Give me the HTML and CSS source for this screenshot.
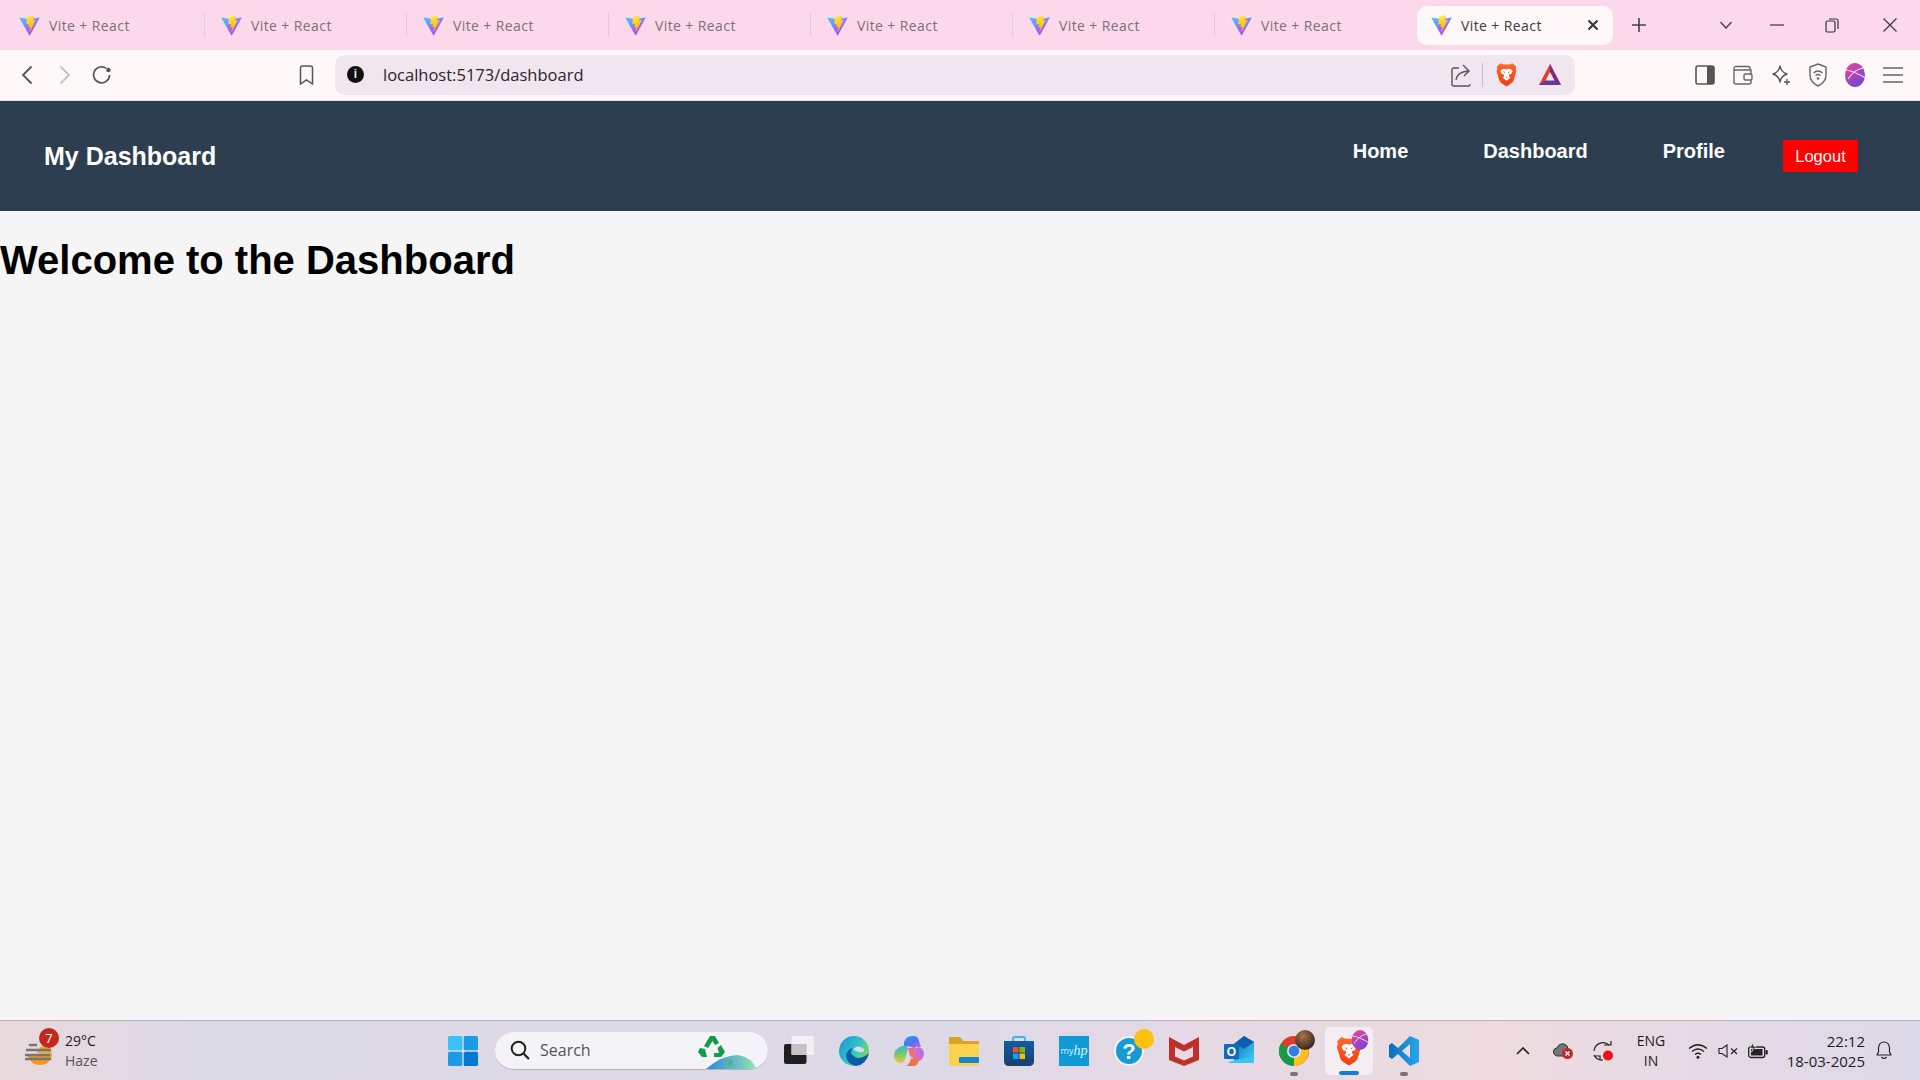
FILE: index.html
```html
<!DOCTYPE html>
<html lang="en">
<head>
    <meta charset="UTF-8">
    <meta name="viewport" content="width=device-width, initial-scale=1.0">
    <title>Vite + React</title>
    <link rel="stylesheet" href="styles.css">
</head>
<body>
    <svg class="defs" width="0" height="0">
        <defs>
            <linearGradient id="viteBlue" x1="0" y1="0" x2="0.6" y2="1">
                <stop offset="0" stop-color="#41d1ff"/>
                <stop offset="1" stop-color="#bd34fe"/>
            </linearGradient>
            <linearGradient id="viteYellow" x1="0.3" y1="0" x2="0.5" y2="1">
                <stop offset="0" stop-color="#ffea83"/>
                <stop offset="0.2" stop-color="#ffdd35"/>
                <stop offset="1" stop-color="#ffa800"/>
            </linearGradient>
            <linearGradient id="braveOrange" x1="0" y1="0" x2="0" y2="1">
                <stop offset="0" stop-color="#ff6a2b"/>
                <stop offset="1" stop-color="#f03d12"/>
            </linearGradient>
            <linearGradient id="avatarGrad" x1="0.2" y1="0" x2="0.8" y2="1">
                <stop offset="0" stop-color="#e8439a"/>
                <stop offset="1" stop-color="#6b45d8"/>
            </linearGradient>
            <linearGradient id="edgeGrad" x1="0" y1="0" x2="1" y2="0.6">
                <stop offset="0" stop-color="#1d8fd8"/>
                <stop offset="0.6" stop-color="#2fc5c8"/>
                <stop offset="1" stop-color="#7fdc5e"/>
            </linearGradient>
            <linearGradient id="copilotBlue" x1="0" y1="0" x2="1" y2="1">
                <stop offset="0" stop-color="#17a5ef"/>
                <stop offset="0.55" stop-color="#5b6ff0"/>
                <stop offset="1" stop-color="#c86bdc"/>
            </linearGradient>
            <linearGradient id="copilotWarm" x1="0" y1="0" x2="1" y2="1">
                <stop offset="0" stop-color="#e66bb0"/>
                <stop offset="0.6" stop-color="#f4705a"/>
                <stop offset="1" stop-color="#f7a24b"/>
            </linearGradient>
            <linearGradient id="copilotGreen" x1="0" y1="0" x2="0" y2="1">
                <stop offset="0" stop-color="#35b8c8"/>
                <stop offset="0.5" stop-color="#7ccb6a"/>
                <stop offset="1" stop-color="#f7c53c"/>
            </linearGradient>
            <linearGradient id="globeGrad" x1="0" y1="0" x2="1" y2="0">
                <stop offset="0" stop-color="#2e86e0"/>
                <stop offset="1" stop-color="#8fe3b0"/>
            </linearGradient>
            <linearGradient id="storeGrad" x1="0" y1="0" x2="0" y2="1">
                <stop offset="0" stop-color="#0e5ea8"/>
                <stop offset="1" stop-color="#1d3c6e"/>
            </linearGradient>
            <linearGradient id="vsGrad" x1="0" y1="0" x2="1" y2="0">
                <stop offset="0" stop-color="#0a70b8"/>
                <stop offset="1" stop-color="#25a8ee"/>
            </linearGradient>
            <linearGradient id="outlookGrad" x1="0" y1="0" x2="1" y2="1">
                <stop offset="0" stop-color="#0f6cbd"/>
                <stop offset="1" stop-color="#40d0f5"/>
            </linearGradient>
            <symbol id="vite" viewBox="0 0 410 404">
                <path fill="url(#viteBlue)" d="M399.641 59.5246L215.643 388.545C211.844 395.338 202.084 395.378 198.228 388.618L10.5817 59.5563C6.38087 52.1896 12.6802 43.2665 21.0281 44.7586L205.223 77.6824C206.398 77.8924 207.601 77.8904 208.776 77.6763L389.119 44.8058C397.439 43.2894 403.768 52.1434 399.641 59.5246Z"/>
                <path fill="url(#viteYellow)" d="M292.965 1.5744L156.801 28.2552C154.563 28.6937 152.906 30.5903 152.771 32.8664L144.395 174.33C144.198 177.662 147.258 180.248 150.51 179.498L188.42 170.749C191.967 169.931 195.172 173.055 194.443 176.622L183.18 231.775C182.422 235.487 185.907 238.661 189.532 237.56L212.947 230.446C216.577 229.344 220.065 232.527 219.297 236.242L201.398 322.875C200.278 328.294 207.486 331.249 210.492 326.603L212.5 323.5L323.454 102.072C325.312 98.3645 322.108 94.137 318.036 94.9228L279.014 102.454C275.347 103.161 272.227 99.746 273.262 96.1583L298.731 7.86689C299.767 4.27314 296.636 0.855181 292.965 1.5744Z"/>
            </symbol>
            <symbol id="brave" viewBox="0 0 24 28">
                <path fill="url(#braveOrange)" d="M5 1 L9 2.5 h6 L19 1 L23 5 L22.4 8 L23.4 10 L20 21 Q19.4 23 17 24.4 L12 27.6 L7 24.4 Q4.6 23 4 21 L0.6 10 L1.6 8 L1 5 Z"/>
                <path fill="#fff" d="M7 8 L10 7.4 L12 8.2 L14 7.4 L17 8 L19 10 L17.4 13.4 L15 14 L14.6 16 L16.4 17.6 L12 21 L7.6 17.6 L9.4 16 L9 14 L6.6 13.4 L5 10 Z"/>
                <path fill="url(#braveOrange)" d="M8 10.4 L10.6 11.2 L9.8 12.6 Z M16 10.4 L13.4 11.2 L14.2 12.6 Z M10.8 17 h2.4 L12 18.4 Z"/>
            </symbol>
            <symbol id="avatar" viewBox="0 0 20 24">
                <ellipse cx="10" cy="12" rx="10" ry="12" fill="url(#avatarGrad)"/>
                <path fill="none" stroke="#f3dbe8" stroke-width="1.2" d="M1 7 C7 8 14 11 20 15 M3 16 C7 10 12 6 18 5"/>
            </symbol>
        </defs>
    </svg>

    <div class="tabstrip">
        <div class="tab"><svg class="favicon"><use href="#vite"/></svg><span>Vite + React</span></div>
        <div class="tab"><svg class="favicon"><use href="#vite"/></svg><span>Vite + React</span></div>
        <div class="tab"><svg class="favicon"><use href="#vite"/></svg><span>Vite + React</span></div>
        <div class="tab"><svg class="favicon"><use href="#vite"/></svg><span>Vite + React</span></div>
        <div class="tab"><svg class="favicon"><use href="#vite"/></svg><span>Vite + React</span></div>
        <div class="tab"><svg class="favicon"><use href="#vite"/></svg><span>Vite + React</span></div>
        <div class="tab tab-last"><svg class="favicon"><use href="#vite"/></svg><span>Vite + React</span></div>
        <div class="tab tab-active">
            <svg class="favicon"><use href="#vite"/></svg><span>Vite + React</span>
            <svg class="tab-close" width="12" height="12" viewBox="0 0 12 12"><path d="M1.5 1.5 L10.5 10.5 M10.5 1.5 L1.5 10.5" stroke="#333" stroke-width="2"/></svg>
        </div>
        <svg class="new-tab" width="16" height="16" viewBox="0 0 16 16"><path d="M8 1 V15 M1 8 H15" stroke="#444" stroke-width="1.6"/></svg>
        <svg class="tab-list" width="14" height="10" viewBox="0 0 14 10"><path d="M1.5 2 L7 8 L12.5 2" fill="none" stroke="#555" stroke-width="1.7"/></svg>
        <svg class="win-btn win-min" width="14" height="2" viewBox="0 0 14 2"><path d="M0 1 H14" stroke="#333" stroke-width="1.2"/></svg>
        <svg class="win-btn win-max" width="14" height="16" viewBox="0 0 14 16"><rect x="1" y="4" width="9" height="11" rx="1.5" fill="none" stroke="#333" stroke-width="1.2"/><path d="M4 2 H11 Q13 2 13 4 V12" fill="none" stroke="#333" stroke-width="1.2"/></svg>
        <svg class="win-btn win-close" width="14" height="14" viewBox="0 0 14 14"><path d="M0.5 0.5 L13.5 13.5 M13.5 0.5 L0.5 13.5" stroke="#333" stroke-width="1.1"/></svg>
    </div>

    <div class="toolbar">
        <svg class="tool-back" width="12" height="20" viewBox="0 0 12 20"><path d="M10.5 1.5 L2 10 L10.5 18.5" fill="none" stroke="#555" stroke-width="1.8"/></svg>
        <svg class="tool-forward" width="12" height="20" viewBox="0 0 12 20"><path d="M1.5 1.5 L10 10 L1.5 18.5" fill="none" stroke="#c4c0c2" stroke-width="1.8"/></svg>
        <svg class="tool-reload" width="20" height="20" viewBox="0 0 20 20"><path d="M17.6 10 A8 8 0 1 1 14.4 3.4" fill="none" stroke="#555" stroke-width="1.7"/><circle cx="16.4" cy="5" r="2.2" fill="#555"/></svg>
        <svg class="tool-bookmark" width="15" height="20" viewBox="0 0 15 20"><path d="M1.5 3 Q1.5 1 3.5 1 H11.5 Q13.5 1 13.5 3 V19 L7.5 15 L1.5 19 Z" fill="none" stroke="#555" stroke-width="1.5"/></svg>
        <div class="urlbar">
            <span class="url-info">i</span>
            <span class="url-text">localhost:5173/dashboard</span>
            <svg class="url-share" width="20" height="24" viewBox="0 0 20 24"><path d="M8 5 H3 Q1 5 1 7 V21 Q1 23 3 23 H18 Q19 23 19 21" fill="none" stroke="#555" stroke-width="1.4"/><path d="M5 17 Q6 9 17 8 M12 2 L18 8 L13 13" fill="none" stroke="#555" stroke-width="1.4"/></svg>
            <span class="url-sep"></span>
            <svg class="url-brave" width="21" height="25"><use href="#brave"/></svg>
            <svg class="url-bat" width="24" height="24" viewBox="0 0 24 24"><path d="M12 1 L23 22 H1 Z" fill="#e23b2b"/><path d="M12 1 L23 22 L16 17 L12 9 Z" fill="#7a2a86"/><path d="M1 22 H23 L16 17 H8 Z" fill="#5f3a9e"/><path d="M12 9 L16.5 17.6 H7.5 Z" fill="#f0e6ef"/></svg>
        </div>
        <div class="tool-right">
            <svg width="20" height="20" viewBox="0 0 20 20"><rect x="1" y="1" width="18" height="18" rx="2" fill="none" stroke="#555" stroke-width="1.6"/><rect x="12" y="1" width="7" height="18" fill="#555"/></svg>
            <svg width="20" height="20" viewBox="0 0 20 20"><path d="M17 5 V3 Q17 1.5 15 1.5 H3 Q1 1.5 1 4 V17 Q1 19 3 19 H16 Q18 19 18 17 V5 Z M1 5 H18" fill="none" stroke="#666" stroke-width="1.4"/><rect x="11" y="9" width="8" height="6" rx="1.5" fill="#fff8f8" stroke="#666" stroke-width="1.4"/></svg>
            <svg width="20" height="22" viewBox="0 0 20 22"><path d="M9 2 Q10 8 16 10 Q10 12 9 18 Q8 12 2 10 Q8 8 9 2 Z" fill="none" stroke="#555" stroke-width="1.5" stroke-linejoin="round"/><path d="M16 15 V21 M13 18 H19" stroke="#555" stroke-width="1.4"/></svg>
            <svg width="18" height="24" viewBox="0 0 18 24"><path d="M9 1 L17 4 V12 Q17 19 9 23 Q1 19 1 12 V4 Z" fill="none" stroke="#666" stroke-width="1.4"/><path d="M4.5 10 Q9 6 13.5 10 M6.5 12.5 Q9 10.5 11.5 12.5" fill="none" stroke="#666" stroke-width="1.3"/><circle cx="9" cy="15.5" r="1.3" fill="#666"/></svg>
            <svg width="20" height="24"><use href="#avatar"/></svg>
            <svg width="20" height="18" viewBox="0 0 20 18"><path d="M0 2 H20 M0 9 H20 M0 16 H20" stroke="#666" stroke-width="1.5"/></svg>
        </div>
    </div>

    <nav class="navbar">
        <div class="nav-logo">My Dashboard</div>
        <ul class="nav-links">
            <li><a href="#">Home</a></li>
            <li><a href="#">Dashboard</a></li>
            <li><a href="#">Profile</a></li>
            <li class="nav-logout"><button>Logout</button></li>
        </ul>
    </nav>

    <main class="content">
        <h1>Welcome to the Dashboard</h1>
    </main>

    <footer class="taskbar">
        <div class="weather">
            <div class="weather-icon">
                <svg width="30" height="36" viewBox="0 0 30 36"><path d="M3 21 H27 A12 11 0 0 1 3 21 Z" fill="#f0971c"/><path d="M12 20 Q14 11 24 12 L27 21 Z" fill="#f2a92c"/><path d="M5 12 H11 M2 17 H25 M0 22 H24 M1 26 H25" stroke="#77757a" stroke-width="2.6" stroke-linecap="round"/></svg>
                <span class="weather-badge">7</span>
            </div>
            <div class="weather-text"><span>29°C</span><span class="weather-sub">Haze</span></div>
        </div>

        <div class="task-center">
            <svg class="task-icon" viewBox="0 0 30 30"><rect x="0" y="0" width="14.3" height="14.3" rx="1.5" fill="#37c3f7"/><rect x="15.7" y="0" width="14.3" height="14.3" rx="1.5" fill="#1b9be4"/><rect x="0" y="15.7" width="14.3" height="14.3" rx="1.5" fill="#1b9be4"/><rect x="15.7" y="15.7" width="14.3" height="14.3" rx="1.5" fill="#0078d4"/></svg>

            <div class="searchbox">
                <svg width="20" height="20" viewBox="0 0 20 20"><circle cx="8.5" cy="8.5" r="6.8" fill="none" stroke="#222" stroke-width="2"/><path d="M13.5 13.5 L19 19" stroke="#222" stroke-width="2.2"/></svg>
                <span>Search</span>
                <svg class="search-art" width="66" height="36" viewBox="0 0 66 36"><path d="M14 3 L19 3 L23 10 L19 12 L16.5 8 L12 15 L8 13 Z M25 12 L29 19 L25 24 L18 24 V20 L23 20 L21.5 15 Z M4 15 L9 16 L11 24 L6 24 L2 19 Z" fill="#109c4a"/><path d="M10 36 Q26 22 42 22 Q56 24 60 36 Z" fill="url(#globeGrad)"/><path d="M30 27 Q34 25 37 28 L35 33 L31 32 Z" fill="#4fb38f"/></svg>
            </div>

            <svg class="task-icon" viewBox="0 0 30 30"><rect x="0" y="8" width="22.5" height="20" rx="2" fill="#1f1f1f"/><rect x="7.5" y="0" width="22.5" height="19" rx="1.5" fill="#f4f3f6" fill-opacity="0.85"/><rect x="7.5" y="8" width="15" height="11" fill="#c4c2c4"/></svg>

            <svg class="task-icon" viewBox="0 0 30 30"><circle cx="15" cy="15" r="15" fill="url(#edgeGrad)"/><path d="M30 17 Q22 24 16 21 Q9 18 14 12 Q8 13 7 20 Q8 28 17 30 Q27 29 30 17 Z" fill="#0c5aa8"/><path d="M14 13 Q19 8 25 13 Q26 17 20 16 Q15 15 14 13 Z" fill="#dcdae6"/></svg>

            <svg class="task-icon" viewBox="0 0 30 30"><path d="M10 6 Q12 0 18 0 H20 Q24 0 25 5 L27 11 Q23 10 20 12 L17 11 Q13 9 10 12 Z" fill="url(#copilotBlue)"/><path d="M25 11 Q30 13 30 18 Q29 25 24 25 H18 L22 12 Z" fill="#c06fdc"/><path d="M8 10 Q12 9 14 12 L11 24 Q9 28 5 27 Q0 25 0 19 Q0 13 8 10 Z" fill="url(#copilotGreen)"/><path d="M14 12 L22 12 L18 26 Q16 30 11 30 H20 Q24 29 25 24 L24 20 Q19 23 16 20 Z" fill="url(#copilotWarm)"/><path d="M12 30 H21 Q25 27 25 22 Q20 24 17 22 Q16 28 12 30 Z" fill="#f3704f"/></svg>

            <svg class="task-icon" viewBox="0 0 30 30"><path d="M0 2 Q0 1 1 1 H11 L14 5 H30 V10 H0 Z" fill="#dca320"/><path d="M0 8 H30 V29 Q30 30 29 30 H1 Q0 30 0 29 Z" fill="#fbd24e"/><rect x="10" y="21" width="20" height="6" rx="1" fill="#1486d1"/></svg>

            <svg class="task-icon" viewBox="0 0 30 30"><path d="M9 6 V3 Q9 1 11 1 H19 Q21 1 21 3 V6" fill="none" stroke="#3bb5e8" stroke-width="1.8"/><path d="M0 5 H30 V25 Q30 30 25 30 H5 Q0 30 0 25 Z" fill="url(#storeGrad)"/><rect x="9" y="11" width="5.5" height="5.5" fill="#f25022"/><rect x="15.5" y="11" width="5.5" height="5.5" fill="#7fba00"/><rect x="9" y="17.5" width="5.5" height="5.5" fill="#00a4ef"/><rect x="15.5" y="17.5" width="5.5" height="5.5" fill="#ffb900"/></svg>

            <div class="task-myhp"><span>my</span><em>hp</em></div>

            <div class="task-wrap">
                <svg class="task-icon" viewBox="0 0 30 30"><circle cx="15" cy="15" r="14" fill="#159ad6" stroke="#f4f3f6" stroke-width="2"/><text x="15" y="23" text-anchor="middle" class="help-mark">?</text></svg>
                <span class="help-dot"></span>
            </div>

            <svg class="task-icon" viewBox="0 0 30 30"><path d="M0 1 L15 9 L30 1 V24 L15 30 L0 24 Z" fill="#c0302b"/><path d="M6 11 L15 15.5 L24 11 V20.5 L15 24.5 L6 20.5 Z" fill="#e6d9e2"/></svg>

            <svg class="task-icon" viewBox="0 0 30 30"><path d="M10 8 L20 0 L30 6 V25 Q30 27 28 27 H10 Z" fill="url(#outlookGrad)"/><path d="M10 8 L20 0 L30 6 L20 13 Z" fill="#0e5fae"/><path d="M4 26 L30 20 V25 Q30 27 28 27 H6 Z" fill="#37c6f4"/><rect x="0" y="8" width="15" height="15" rx="1" fill="#0f6cbd"/><text x="7.5" y="20" text-anchor="middle" class="outlook-mark">O</text></svg>

            <div class="task-wrap task-running">
                <svg class="task-icon" viewBox="0 0 30 30"><circle cx="15" cy="15" r="15" fill="#e33b2e"/><path d="M15 15 L28 8 A15 15 0 0 1 15 30 Z" fill="#fbc116"/><path d="M15 15 L15 30 A15 15 0 0 1 2 7.5 Z" fill="#189a47"/><circle cx="15" cy="15" r="7" fill="#e8e6ee"/><circle cx="15" cy="15" r="5.4" fill="#2f7fe6"/></svg>
                <span class="chrome-photo"></span>
            </div>

            <div class="task-wrap task-active">
                <svg class="task-icon" viewBox="0 0 24 28"><use href="#brave"/></svg>
                <svg class="brave-avatar" width="20" height="20"><use href="#avatar"/></svg>
            </div>

            <div class="task-wrap task-running">
                <svg class="task-icon" viewBox="0 0 30 30"><path d="M21 0 L30 4 V26 L21 30 L9 18 L3 23 L0 21 V9 L3 7 L9 12 Z M21 8 L13 15 L21 22 Z" fill="url(#vsGrad)" fill-rule="evenodd"/></svg>
            </div>
        </div>

        <div class="tray">
            <svg class="tray-chevron" width="14" height="8" viewBox="0 0 14 8"><path d="M1 7 L7 1 L13 7" fill="none" stroke="#222" stroke-width="1.6"/></svg>
            <svg class="tray-cloud" width="20" height="16" viewBox="0 0 20 16"><path d="M4 13 Q0 12 0.5 8 Q1 5 4 5 Q6 0 11 1 Q15 2 15 6 L12 13 Z" fill="#77757a" stroke="#333" stroke-width="1"/><circle cx="14.5" cy="10.5" r="5.5" fill="#c8242c"/><path d="M12.5 8.5 L16.5 12.5 M16.5 8.5 L12.5 12.5" stroke="#fff" stroke-width="1.3"/></svg>
            <svg class="tray-sync" width="20" height="20" viewBox="0 0 20 20"><path d="M1 10 A9 9 0 0 1 16 4 M1 14 A9 9 0 0 0 10 19" fill="none" stroke="#222" stroke-width="1.2"/><path d="M11 4 H18 V0" fill="none" stroke="#222" stroke-width="1.2"/><path d="M1 15 H7 V19" fill="none" stroke="#222" stroke-width="1.2"/><circle cx="15" cy="14.5" r="5" fill="#ee0f1c"/></svg>
            <div class="tray-lang"><span>ENG</span><span>IN</span></div>
            <svg class="tray-wifi" width="20" height="16" viewBox="0 0 20 16"><path d="M1 5.5 Q10 -2 19 5.5 M4 8.5 Q10 3.5 16 8.5 M7 11.5 Q10 9 13 11.5" fill="none" stroke="#222" stroke-width="1.3"/><circle cx="10" cy="14.3" r="1.5" fill="#222"/></svg>
            <svg class="tray-sound" width="20" height="14" viewBox="0 0 20 14"><path d="M1 4.5 H4 L9 1 V13 L4 9.5 H1 Z" fill="none" stroke="#222" stroke-width="1.1"/><path d="M13 4.5 L19 10 M19 4.5 L13 10" stroke="#222" stroke-width="1.1"/></svg>
            <svg class="tray-battery" width="20" height="16" viewBox="0 0 20 16"><rect x="0.7" y="4" width="16" height="10.5" rx="2" fill="none" stroke="#222" stroke-width="1.3"/><rect x="3" y="6" width="11.5" height="6.5" fill="#222"/><rect x="17.5" y="7" width="2.3" height="4.5" rx="1" fill="#222"/><path d="M5 0 L2 5 H5 L3.5 9 L8 3.5 H5.5 Z" fill="#222" stroke="#e6d8e3" stroke-width="0.6"/></svg>
            <div class="tray-clock"><span>22:12</span><span>18-03-2025</span></div>
            <svg class="tray-bell" width="18" height="19" viewBox="0 0 18 19"><path d="M2 14 L3.5 11 V7 Q4 1 9 1 Q14 1 14.5 7 V11 L16 14 Z" fill="none" stroke="#222" stroke-width="1.2" stroke-linejoin="round"/><path d="M6.5 16 Q9 19 11.5 16" fill="none" stroke="#222" stroke-width="1.2"/></svg>
        </div>
    </footer>
</body>
</html>
```

FILE: styles.css
```css
* {
    padding: 0;
    margin: 0;
    box-sizing: border-box;
}

body {
    width: 1920px;
    height: 1080px;
    overflow: hidden;
    display: flex;
    flex-direction: column;
    background: #f5f5f5;
    font-family: "Liberation Sans", Arial, sans-serif;
}

.defs {
    position: absolute;
}

/* browser tabs */
.tabstrip {
    height: 50px;
    flex-shrink: 0;
    display: flex;
    align-items: center;
    padding-left: 3px;
    background: #fbd9ea;
    font-family: "Open Sans", sans-serif;
    font-size: 14px;
    letter-spacing: 0.4px;
    color: #7d6f77;
}

.tab {
    width: 202px;
    height: 40px;
    flex-shrink: 0;
    display: flex;
    align-items: center;
    gap: 9px;
    padding-left: 16px;
    position: relative;
}

.tab::after {
    content: "";
    position: absolute;
    right: 0;
    top: 8px;
    height: 24px;
    width: 1px;
    background: #e3c8d7;
}

.tab-last::after {
    display: none;
}

.tab-active {
    width: 196px;
    height: 39px;
    padding-left: 14px;
    border-radius: 10px;
    background: #fff8f8;
    color: #3d3a3c;
}

.tab-active::after {
    display: none;
}

.favicon {
    width: 21px;
    height: 21px;
    flex-shrink: 0;
}

.tab-close {
    margin-left: auto;
    margin-right: 14px;
}

.new-tab {
    margin-left: 18px;
}

.tab-list {
    margin-left: 72px;
}

.win-min {
    margin-left: 37px;
}

.win-max {
    margin-left: 41px;
}

.win-close {
    margin-left: 44px;
}

/* toolbar + address bar */
.toolbar {
    height: 51px;
    flex-shrink: 0;
    display: flex;
    align-items: center;
    padding-bottom: 1px;
    background: #fff8f8;
    border-bottom: 1px solid #f0dde5;
}

.tool-back {
    margin-left: 21px;
}

.tool-forward {
    margin-left: 26px;
}

.tool-reload {
    margin-left: 21px;
}

.tool-bookmark {
    margin-left: 187px;
}

.urlbar {
    width: 1240px;
    height: 40px;
    margin-left: 21px;
    padding-left: 12px;
    display: flex;
    align-items: center;
    border-radius: 10px;
    background: #f0e6ef;
}

.url-info {
    width: 17px;
    height: 17px;
    border-radius: 50%;
    background: #111;
    color: #f0e6ef;
    font-size: 12px;
    font-weight: bold;
    line-height: 17px;
    text-align: center;
}

.url-text {
    margin-left: 19px;
    font-family: "Open Sans", sans-serif;
    font-size: 16.5px;
    color: #2a2528;
}

.url-share {
    margin-left: auto;
}

.url-sep {
    width: 1px;
    height: 24px;
    margin-left: 11px;
    background: #c9c0c8;
}

.url-brave {
    margin-left: 13px;
}

.url-bat {
    margin-left: 21px;
    margin-right: 13px;
}

.tool-right {
    margin-left: 120px;
    display: flex;
    align-items: center;
    gap: 18px;
}

/* app navbar */
.navbar {
    height: 110px;
    flex-shrink: 0;
    display: flex;
    align-items: center;
    justify-content: space-between;
    padding: 0 62px 0 44px;
    background: #2c3e50;
    color: #fff;
}

.nav-logo {
    font-size: 25px;
    font-weight: bold;
}

.nav-links {
    display: flex;
    align-items: center;
    gap: 75px;
    list-style-type: none;
}

.nav-links a {
    display: block;
    padding-bottom: 10px;
    font-size: 20px;
    font-weight: bold;
    color: #fff;
    text-decoration: none;
}

.nav-links .nav-logout {
    margin-left: -17px;
}

.nav-logout button {
    width: 75px;
    height: 32px;
    border: none;
    background: #ff0000;
    color: #fff;
    font-family: "Liberation Sans", Arial, sans-serif;
    font-size: 16.5px;
}

.content {
    flex: 1;
}

.content h1 {
    margin: 27px 0;
    font-size: 40px;
    font-weight: bold;
    color: #000;
}

/* windows taskbar */
.taskbar {
    height: 60px;
    flex-shrink: 0;
    display: flex;
    align-items: center;
    border-top: 1px solid #b9b5bc;
    background: linear-gradient(90deg, #e9d9dc 0%, #dcd9e6 10%, #ded9e7 50%, #e6d9e3 65%, #eedcdf 78%, #e8dae3 85%, #dcd9e8 100%);
    font-family: "Open Sans", sans-serif;
    font-size: 14px;
    color: #1c1c1c;
}

.weather {
    width: 448px;
    display: flex;
    align-items: center;
    padding-left: 25px;
    flex-shrink: 0;
}

.weather-icon {
    position: relative;
    width: 30px;
    height: 36px;
}

.weather-badge {
    position: absolute;
    top: -5px;
    right: -4px;
    width: 20px;
    height: 20px;
    border-radius: 50%;
    background: #c4281c;
    color: #fff;
    font-size: 13px;
    line-height: 20px;
    text-align: center;
}

.weather-text {
    margin-left: 10px;
    display: flex;
    flex-direction: column;
    line-height: 20px;
}

.weather-sub {
    color: #555;
}

.task-center {
    display: flex;
    align-items: center;
    gap: 25px;
}

.task-icon {
    display: block;
    width: 30px;
    height: 30px;
    flex-shrink: 0;
}

.searchbox {
    width: 273px;
    height: 38px;
    margin: 0 -9px 0 -8px;
    padding-left: 15px;
    display: flex;
    align-items: center;
    gap: 10px;
    position: relative;
    overflow: hidden;
    border-radius: 19px;
    border-bottom: 1px solid #b5b2b8;
    background: #f4f3f7;
    font-size: 16px;
    color: #555;
}

.search-art {
    position: absolute;
    right: 6px;
    bottom: 0;
}

.task-myhp {
    width: 30px;
    height: 30px;
    display: flex;
    align-items: center;
    justify-content: center;
    background: #0f9ad6;
    color: #dff2fb;
    font-size: 9px;
}

.task-myhp em {
    font-size: 14px;
    font-family: "Liberation Serif", serif;
}

.task-wrap {
    position: relative;
}

.help-mark {
    font-family: "Liberation Sans", sans-serif;
    font-size: 22px;
    font-weight: bold;
    fill: #fff;
}

.help-dot {
    position: absolute;
    top: -7px;
    right: -10px;
    width: 20px;
    height: 20px;
    border-radius: 50%;
    background: #fdc20f;
}

.outlook-mark {
    font-family: "Liberation Sans", sans-serif;
    font-size: 12px;
    font-weight: bold;
    fill: #fff;
}

.chrome-photo {
    position: absolute;
    top: -6px;
    right: -6px;
    width: 20px;
    height: 20px;
    border-radius: 50%;
    background: radial-gradient(circle at 40% 30%, #a8744f, #3a2620 75%);
}

.task-running::after {
    content: "";
    position: absolute;
    left: 11px;
    bottom: -10px;
    width: 8px;
    height: 4px;
    border-radius: 2px;
    background: #77757a;
}

.task-active::before {
    content: "";
    position: absolute;
    left: -9px;
    top: -9px;
    width: 48px;
    height: 48px;
    border-radius: 5px;
    background: #f3eef2;
}

.task-active::after {
    content: "";
    position: absolute;
    left: 5px;
    bottom: -9px;
    width: 20px;
    height: 4px;
    border-radius: 2px;
    background: #0f7fd6;
}

.task-active .task-icon {
    position: relative;
}

.brave-avatar {
    position: absolute;
    top: -6px;
    right: -6px;
}

.tray {
    flex: 1;
    display: flex;
    align-items: center;
    height: 100%;
}

.tray-chevron {
    margin-left: 97px;
}

.tray-cloud {
    margin-left: 23px;
}

.tray-sync {
    margin-left: 20px;
}

.tray-lang {
    width: 40px;
    margin-left: 18px;
    display: flex;
    flex-direction: column;
    align-items: center;
    line-height: 20px;
}

.tray-wifi {
    margin-left: 17px;
}

.tray-sound {
    margin-left: 10px;
}

.tray-battery {
    margin-left: 10px;
}

.tray-clock {
    width: 97px;
    display: flex;
    flex-direction: column;
    align-items: flex-end;
    font-size: 15px;
    line-height: 20px;
}

.tray-bell {
    margin-left: 10px;
}
```
